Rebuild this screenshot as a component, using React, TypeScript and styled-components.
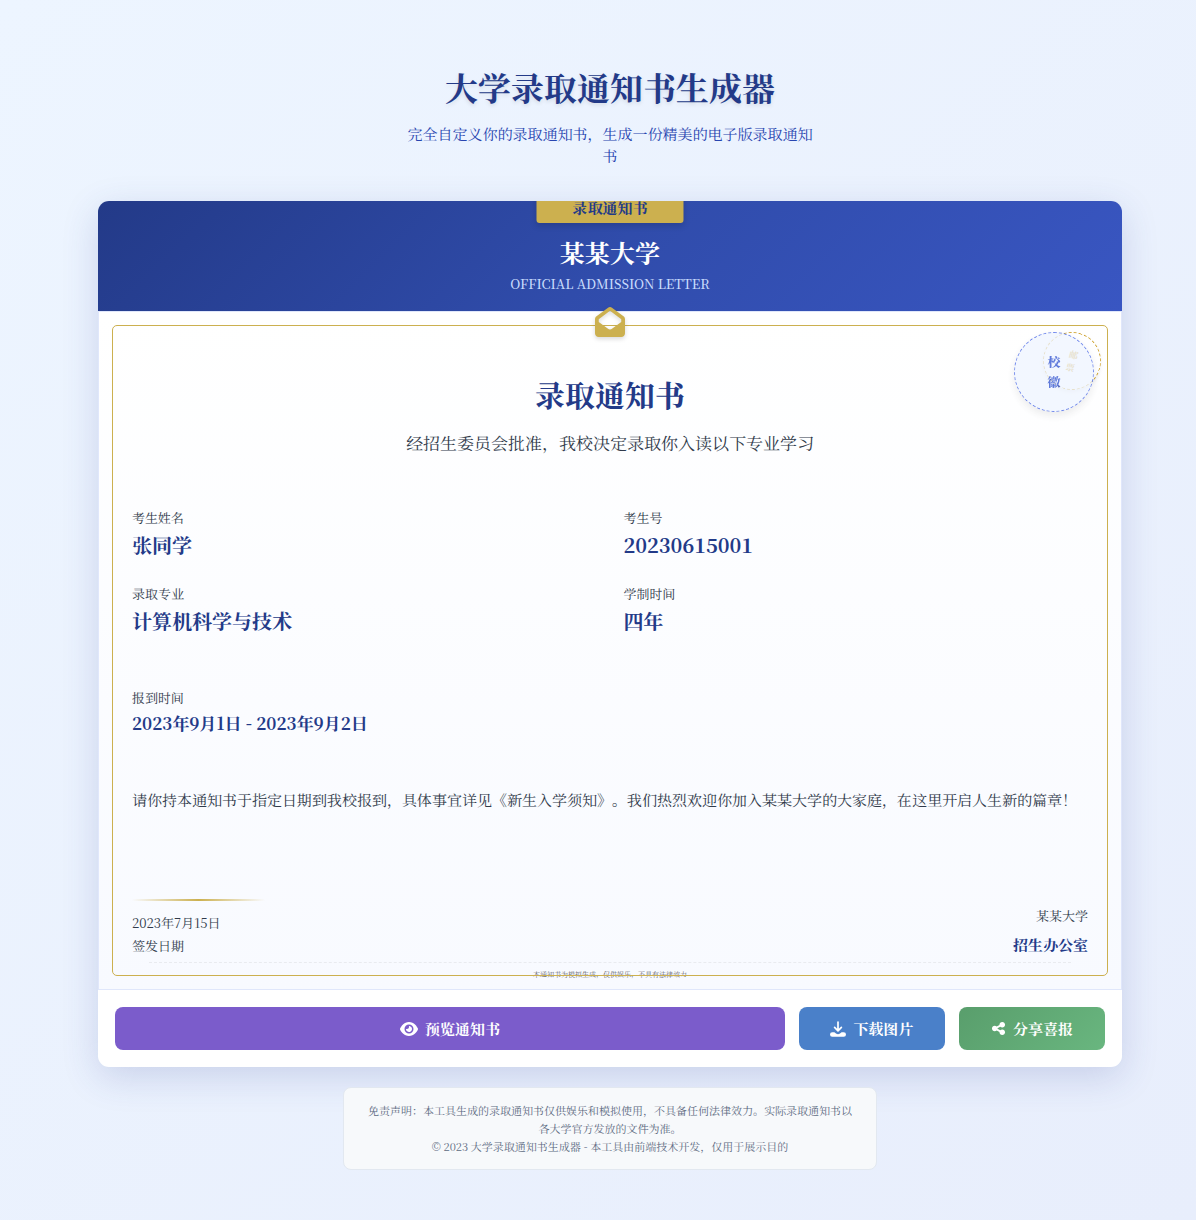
import React from 'react';
import styled, { createGlobalStyle, css } from 'styled-components';
import { FaEnvelopeOpen, FaEye, FaShareNodes } from 'react-icons/fa6';

const GlobalStyle = createGlobalStyle`
  *, *::before, *::after { box-sizing: border-box; }
  body {
    margin: 0;
    min-height: 100vh;
    background: linear-gradient(135deg, #edf5ff 0%, #e8eefc 100%);
    font-family: "Noto Serif SC", "Noto Serif CJK SC", "Noto Sans CJK SC", serif;
    text-spacing-trim: space-all;
    color: #303a4a;
  }
  h1, h2, h3, p, dl, dd { margin: 0; }
`;

const Page = styled.div`
  padding: 63px 74px 50px 98px;
`;

const Container = styled.div`
  max-width: 1024px;
  margin: 0 auto;
`;

const Intro = styled.header`
  text-align: center;
  margin-bottom: 34px;
`;

const PageTitle = styled.h1`
  font-size: 33px;
  line-height: 48px;
  font-weight: 700;
  color: #233a88;
  text-shadow: 0 2px 4px rgba(0, 0, 0, 0.1);
  margin-bottom: 12px;
`;

const PageSubtitle = styled.p`
  max-width: 410px;
  margin: 0 auto;
  font-size: 15px;
  line-height: 22px;
  color: #2845b0;
`;

const Card = styled.main`
  background: #ffffff;
  border-radius: 11px;
  overflow: hidden;
  box-shadow: 0 10px 36px rgba(48, 64, 150, 0.18);
`;

const Banner = styled.div`
  position: relative;
  height: 110px;
  padding-top: 32px;
  text-align: center;
  color: #ffffff;
  background: linear-gradient(135deg, #233a88 0%, #304cab 50%, #3956c2 100%);
`;

const Ribbon = styled.div`
  position: absolute;
  top: -8px;
  left: 50%;
  transform: translateX(-50%);
  padding: 0 36px;
  border-radius: 3px;
  background: #ccb04f;
  color: #233a88;
  font-size: 15px;
  line-height: 30px;
  font-weight: 700;
  box-shadow: 0 3px 6px rgba(0, 0, 0, 0.15);
`;

const University = styled.h2`
  font-size: 25px;
  line-height: 38px;
  font-weight: 700;
  margin-bottom: 2px;
`;

const BannerNote = styled.p`
  font-size: 13px;
  line-height: 22px;
  font-weight: 500;
  color: #c9dcfd;
`;

const Letter = styled.section`
  position: relative;
  padding: 60px 33px 9px;
  border: 1px solid #e0e7fb;
  background: linear-gradient(180deg, #ffffff 0%, #f8faff 100%);

  &::before {
    content: "";
    position: absolute;
    inset: 13px;
    border: 1px solid #ccb04f;
    border-radius: 5px;
    pointer-events: none;
  }
`;

const Envelope = styled.span`
  position: absolute;
  top: -5px;
  left: 50%;
  transform: translateX(-50%);
  display: flex;
  font-size: 30px;
  color: #ccb04f;
  filter: drop-shadow(0 2px 2px rgba(0, 0, 0, 0.15));
`;

const sealBase = css`
  position: absolute;
  top: 20px;
  display: flex;
  flex-direction: column;
  align-items: center;
  justify-content: center;
  border-radius: 50%;
`;

const StampSeal = styled.div`
  ${sealBase}
  right: 20px;
  width: 58px;
  height: 58px;
  border: 1px dashed #cfa535;
  color: #cfa535;
  font-size: 9px;
  line-height: 13px;
  font-weight: 700;
  transform: rotate(15deg);
  box-shadow: 0 2px 4px rgba(0, 0, 0, 0.08);
`;

const CrestSeal = styled.div`
  ${sealBase}
  right: 27px;
  width: 80px;
  height: 80px;
  border: 1px dashed #3f5fe6;
  background: #eff5ff;
  color: #2c4fd0;
  font-size: 13px;
  line-height: 20px;
  font-weight: 900;
  opacity: 0.75;
  box-shadow: 0 4px 8px rgba(0, 0, 0, 0.1);
`;

const LetterTitle = styled.h2`
  font-size: 30px;
  line-height: 45px;
  font-weight: 700;
  text-align: center;
  color: #233a88;
  margin-bottom: 13px;
`;

const Lead = styled.p`
  font-size: 17px;
  line-height: 26px;
  text-align: center;
  margin-bottom: 52px;
`;

const Details = styled.dl`
  display: grid;
  grid-template-columns: 1fr 1fr;
  gap: 24px 27px;
  margin-bottom: 52px;
`;

const Field = styled.div`
  display: flex;
  flex-direction: column;
  gap: 2px;
`;

const Label = styled.dt`
  font-size: 13px;
  line-height: 20px;
`;

const Value = styled.dd<{ $small?: boolean }>`
  font-size: ${(p) => (p.$small ? 17 : 20)}px;
  line-height: ${(p) => (p.$small ? 26 : 30)}px;
  font-weight: 700;
  color: #233a88;
`;

const Registration = styled.dl`
  margin-bottom: 49px;
`;

const Message = styled.p`
  font-size: 15px;
  line-height: 30px;
  margin-bottom: 84px;
`;

const SignRow = styled.div`
  display: flex;
  justify-content: space-between;
  align-items: flex-end;
`;

const Issued = styled.div`
  display: flex;
  flex-direction: column;
  gap: 3px;
  font-size: 13px;
  line-height: 20px;

  &::before {
    content: "";
    width: 133px;
    height: 2px;
    margin-bottom: 9px;
    background: linear-gradient(90deg, transparent, #ccb04f, transparent);
  }
`;

const Office = styled.div`
  display: flex;
  flex-direction: column;
  gap: 8px;
  text-align: right;
  font-size: 13px;
  line-height: 20px;
`;

const OfficeName = styled.strong`
  font-size: 15px;
  line-height: 22px;
  font-weight: 700;
  color: #233a88;
`;

const FinePrint = styled.p`
  margin: 6px 17px 0;
  padding-top: 5px;
  border-top: 1px dashed #e9ebef;
  font-size: 7px;
  line-height: 12px;
  text-align: center;
  color: #5f636c;
`;

const Actions = styled.div`
  display: flex;
  gap: 14px;
  padding: 17px;
`;

const tones = {
  preview: '#7b5ccb',
  download: '#4a80c9',
  share: 'linear-gradient(135deg, #599e6c 0%, #69b67f 100%)',
};

const ActionButton = styled.button<{ $tone: keyof typeof tones; $grow?: boolean }>`
  flex: ${(p) => (p.$grow ? '1 1 0' : '0 0 146px')};
  display: flex;
  align-items: center;
  justify-content: center;
  gap: 7px;
  height: 43px;
  padding: 0;
  border: 0;
  border-radius: 8px;
  background: ${(p) => tones[p.$tone]};
  color: #ffffff;
  font-family: inherit;
  font-size: 15px;
  font-weight: 700;
  cursor: pointer;
`;

const Disclaimer = styled.footer`
  max-width: 534px;
  margin: 20px auto 0;
  padding: 13px 20px 14px;
  border: 1px solid #e2e8f0;
  border-radius: 8px;
  background: #f7f9fb;
  color: #5d6b82;
  font-size: 11px;
  line-height: 18px;
  text-align: center;
`;

const fields = [
  ['考生姓名', '张同学'],
  ['考生号', '20230615001'],
  ['录取专业', '计算机科学与技术'],
  ['学制时间', '四年'],
];

function DownloadIcon() {
  return (
    <svg width="16" height="16" viewBox="0 0 16 16" fill="none" aria-hidden="true">
      <path d="M8 1v8.6M4.6 6.4 8 9.800l3.400-3.400" stroke="currentColor" strokeWidth="1.700" strokeLinecap="round" strokeLinejoin="round" />
      <path
        d="M2.300 11.200h2.100l1.600 1.200a3.300 3.300 0 0 0 4 0l1.600-1.200h2.100a2.300 2.300 0 0 1 0 4.600H2.300a2.300 2.300 0 0 1 0-4.600Z"
        fill="currentColor"
      />
    </svg>
  );
}

export default function App() {
  return (
    <Page>
      <GlobalStyle />
      <Container>
        <Intro>
          <PageTitle>大学录取通知书生成器</PageTitle>
          <PageSubtitle>完全自定义你的录取通知书，生成一份精美的电子版录取通知书</PageSubtitle>
        </Intro>
        <Card>
          <Banner>
            <Ribbon>录取通知书</Ribbon>
            <University>某某大学</University>
            <BannerNote>OFFICIAL ADMISSION LETTER</BannerNote>
          </Banner>
          <Letter>
            <Envelope><FaEnvelopeOpen /></Envelope>
            <StampSeal><span>邮</span><span>票</span></StampSeal>
            <CrestSeal><span>校</span><span>徽</span></CrestSeal>
            <LetterTitle>录取通知书</LetterTitle>
            <Lead>经招生委员会批准，我校决定录取你入读以下专业学习</Lead>
            <Details>
              {fields.map(([label, value]) => (
                <Field key={label}>
                  <Label>{label}</Label>
                  <Value>{value}</Value>
                </Field>
              ))}
            </Details>
            <Registration>
              <Field>
                <Label>报到时间</Label>
                <Value $small>2023年9月1日 - 2023年9月2日</Value>
              </Field>
            </Registration>
            <Message>
              请你持本通知书于指定日期到我校报到，具体事宜详见《新生入学须知》。我们热烈欢迎你加入某某大学的大家庭，在这里开启人生新的篇章！
            </Message>
            <SignRow>
              <Issued>
                <span>2023年7月15日</span>
                <span>签发日期</span>
              </Issued>
              <Office>
                <span>某某大学</span>
                <OfficeName>招生办公室</OfficeName>
              </Office>
            </SignRow>
            <FinePrint>本通知书为模拟生成，仅供娱乐，不具有法律效力</FinePrint>
          </Letter>
          <Actions>
            <ActionButton type="button" $tone="preview" $grow><FaEye size={18} />预览通知书</ActionButton>
            <ActionButton type="button" $tone="download"><DownloadIcon />下载图片</ActionButton>
            <ActionButton type="button" $tone="share"><FaShareNodes size={15} />分享喜报</ActionButton>
          </Actions>
        </Card>
        <Disclaimer>
          <p>免责声明：本工具生成的录取通知书仅供娱乐和模拟使用，不具备任何法律效力。实际录取通知书以各大学官方发放的文件为准。</p>
          <p>© 2023 大学录取通知书生成器 - 本工具由前端技术开发，仅用于展示目的</p>
        </Disclaimer>
      </Container>
    </Page>
  );
}
